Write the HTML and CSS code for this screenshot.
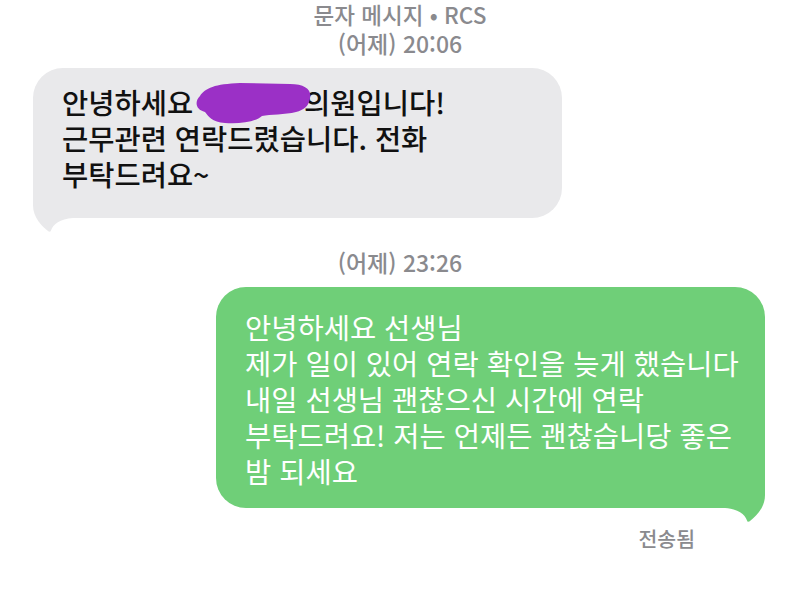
FILE: index.html
```html
<!DOCTYPE html>
<html lang="ko">
<head>
    <meta charset="UTF-8">
    <meta name="viewport" content="width=device-width, initial-scale=1.0">
    <title>문자 메시지</title>
    <link rel="stylesheet" href="styles.css">
</head>
<body>
    <div class="thread">
        <div class="meta">
            <div class="meta-title">문자 메시지 • RCS</div>
            <div class="meta-time">(어제) 20:06</div>
        </div>

        <div class="row row-in">
            <div class="bubble bubble-in">
                안녕하세요 <span class="redact"><svg viewBox="190 80 125 46" width="125" height="46"><path d="M200 96 C205 88 215 84 240 83 L290 84 C305 84 312 90 310 98 C309 106 304 110 296 112 C285 115 270 114 262 116 C255 122 240 124 225 123 C212 122 208 116 205 112 C196 110 194 102 200 96 Z" fill="#9b30c6"/></svg></span>의원입니다!<br>
                근무관련 연락드렸습니다. 전화<br>
                부탁드려요~
                <svg class="tail tail-in" viewBox="0 0 40 46" width="40" height="46"><path d="M0 0 L0 17 C0 30 9 38 15 43 C16 44 17.5 44 18 42.5 C20 36 27 31 40 30 L40 0 Z" fill="#e9e9eb"/></svg>
            </div>
        </div>

        <div class="meta meta-second">
            <div class="meta-time">(어제) 23:26</div>
        </div>

        <div class="row row-out">
            <div class="bubble bubble-out">
                안녕하세요 선생님<br>
                제가 일이 있어 연락 확인을 늦게 했습니다<br>
                내일 선생님 괜찮으신 시간에 연락<br>
                부탁드려요! 저는 언제든 괜찮습니당 좋은<br>
                밤 되세요
                <svg class="tail tail-out" viewBox="0 0 40 46" width="40" height="46"><path d="M40 0 L40 17 C40 30 31 38 25 43 C24 44 22.5 44 22 42.5 C20 36 13 31 0 30 L0 0 Z" fill="#6fcf78"/></svg>
            </div>
        </div>

        <div class="status">전송됨</div>
    </div>
</body>
</html>
```

FILE: styles.css
```css
body {
    margin: 0;
    padding: 0;
    background: #ffffff;
    font-family: "Noto Sans CJK KR", "Noto Sans", sans-serif;
}

.thread {
    display: flex;
    flex-direction: column;
    width: 800px;
    height: 592px;
    overflow: hidden;
}

.meta {
    display: flex;
    flex-direction: column;
    align-items: center;
    color: #8a8a8e;
    font-size: 22.5px;
    line-height: 28px;
    font-weight: 500;
}

.meta-title {
    line-height: 29px;
}

.meta-time {
    font-size: 23px;
}

.meta-second {
    margin-top: 30px;
}

.row {
    display: flex;
}

.row-in {
    margin-top: 11px;
    padding-left: 33px;
}

.row-out {
    margin-top: 11px;
    padding-left: 216px;
}

.bubble {
    position: relative;
    font-size: 28.5px;
    line-height: 36px;
    white-space: nowrap;
    border-radius: 30px;
}

.bubble-in {
    width: 500px;
    padding: 16px 0 26px 29px;
    background: #e9e9eb;
    color: #111111;
    font-weight: 500;
}

.bubble-out {
    width: 520px;
    padding: 22px 0 19px 29px;
    background: #6fcf78;
    color: #ffffff;
}

.redact {
    position: relative;
    display: inline-block;
    width: 103px;
    height: 26px;
}

.redact svg {
    position: absolute;
    left: -11px;
    top: -8px;
}

.tail {
    position: absolute;
    bottom: -16px;
}

.tail-in {
    left: 0;
}

.tail-out {
    right: 0;
}

.status {
    align-self: flex-end;
    margin-top: 16px;
    margin-right: 105px;
    color: #8a8a8e;
    font-size: 20.5px;
    line-height: 28px;
    font-weight: 500;
}
```
